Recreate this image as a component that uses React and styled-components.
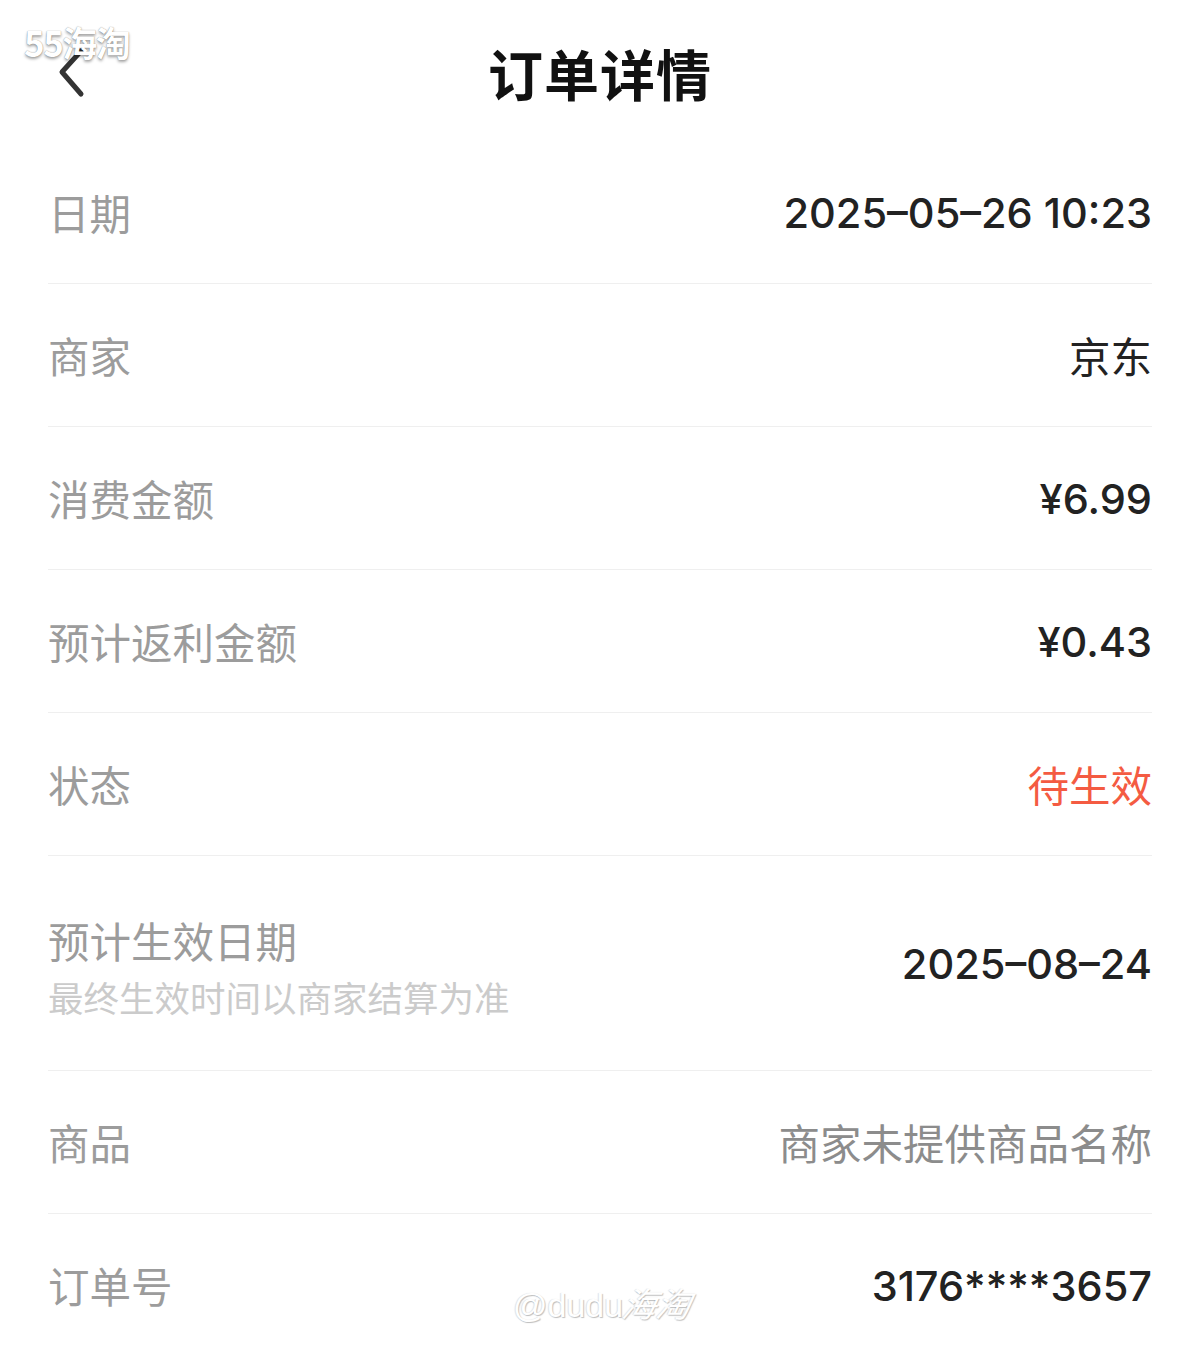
import React from 'react';
import styled, { createGlobalStyle } from 'styled-components';

const GlobalStyle = createGlobalStyle`
  html, body {
    margin: 0;
    padding: 0;
    background: #fff;
  }
  body {
    font-family: Inter, "Noto Sans CJK SC", "Liberation Sans", sans-serif;
    -webkit-font-smoothing: antialiased;
  }
`;

const Page = styled.div`
  position: relative;
  width: 1200px;
  min-height: 1354px;
  overflow: hidden;
  background: #fff;
`;

const NavBar = styled.header`
  position: relative;
  height: 141px;
  display: flex;
  align-items: center;
  justify-content: center;
`;

const BackButton = styled.button`
  position: absolute;
  left: 46px;
  top: 41px;
  width: 50px;
  height: 64px;
  padding: 0;
  border: 0;
  background: none;
  display: flex;
  align-items: center;
  justify-content: center;
`;

const Title = styled.h1`
  margin: 0;
  margin-top: 2px;
  font-family: "Noto Sans CJK SC", sans-serif;
  font-size: 55px;
  font-weight: 700;
  color: #111;
  letter-spacing: 1px;
`;

const List = styled.div`
  padding: 0 48px;
`;

const Row = styled.div`
  display: flex;
  align-items: center;
  justify-content: space-between;
  height: ${p => p.$tall ? 214 : 142}px;
  border-top: ${p => p.$first ? 'none' : '1.5px solid #efefef'};
`;

const LabelBlock = styled.div`
  display: flex;
  flex-direction: column;
  gap: 13px;
  padding-top: ${p => p.$tall ? 8 : 0}px;
`;

const Label = styled.span`
  font-family: "Noto Sans CJK SC", sans-serif;
  font-size: 41.5px;
  line-height: 46px;
  color: #9c9c9c;
`;

const Hint = styled.span`
  font-family: "Noto Sans CJK SC", sans-serif;
  font-size: 35.5px;
  line-height: 42px;
  color: #cbcbcb;
`;

const Value = styled.span`
  font-family: ${p => p.$cjk ? '"Noto Sans CJK SC", sans-serif' : 'Inter, "Noto Sans CJK SC", sans-serif'};
  font-size: ${p => p.$cjk ? 41.5 : 41.5}px;
  line-height: 48px;
  font-weight: ${p => p.$cjk ? 400 : 450};
  color: ${p => p.$tone === 'red' ? '#f45b42' : p.$tone === 'muted' ? '#8c8c8c' : '#222'};
  margin-top: ${p => p.$cjk ? 0 : 2}px;
`;

const Watermark = styled.span`
  position: absolute;
  color: #fff;
  pointer-events: none;
  white-space: nowrap;
`;

const LogoMark = styled(Watermark)`
  left: 24px;
  top: 16px;
  font-family: "Noto Sans CJK SC", sans-serif;
  font-size: 35px;
  font-weight: 700;
  letter-spacing: -1.5px;
  text-shadow: 0 2px 3px rgba(0, 0, 0, 0.35), 0 0 1px rgba(0, 0, 0, 0.45);
`;

const UserMark = styled(Watermark)`
  left: 513px;
  top: 1278px;
  font-family: "Liberation Sans", "Noto Sans CJK SC", sans-serif;
  font-size: 34px;
  text-shadow: 1px 1px 1px rgba(0, 0, 0, 0.25), -1px 0 1px rgba(0, 0, 0, 0.12);
`;

const Slant = styled.span`
  display: inline-block;
  font-style: italic;
  transform: skewX(-10deg);
`;

const rows = [
  { label: '日期', value: '2025–05–26 10:23' },
  { label: '商家', value: '京东', cjk: true },
  { label: '消费金额', value: '¥6.99' },
  { label: '预计返利金额', value: '¥0.43' },
  { label: '状态', value: '待生效', cjk: true, tone: 'red' },
  { label: '预计生效日期', hint: '最终生效时间以商家结算为准', value: '2025–08–24', tall: true },
  { label: '商品', value: '商家未提供商品名称', cjk: true, tone: 'muted' },
  { label: '订单号', value: '3176****3657' },
];

const BackIcon = () => (
  <svg width="34" height="52" viewBox="0 0 34 52">
    <path d="M27 4 L8 25 L27 47" fill="none" stroke="#333" strokeWidth="5" strokeLinecap="round" strokeLinejoin="round" />
  </svg>
);

export default function App() {
  return (
    <Page>
      <GlobalStyle />
      <NavBar>
        <BackButton aria-label="back">
          <BackIcon />
        </BackButton>
        <Title>订单详情</Title>
      </NavBar>
      <List>
        {rows.map((r, i) => (
          <Row key={r.label} $first={i === 0} $tall={r.tall}>
            <LabelBlock $tall={r.tall}>
              <Label>{r.label}</Label>
              {r.hint && <Hint>{r.hint}</Hint>}
            </LabelBlock>
            <Value $cjk={r.cjk} $tone={r.tone}>{r.value}</Value>
          </Row>
        ))}
      </List>
      <LogoMark>55海淘</LogoMark>
      <UserMark>@dudu<Slant>海淘</Slant></UserMark>
    </Page>
  );
}
